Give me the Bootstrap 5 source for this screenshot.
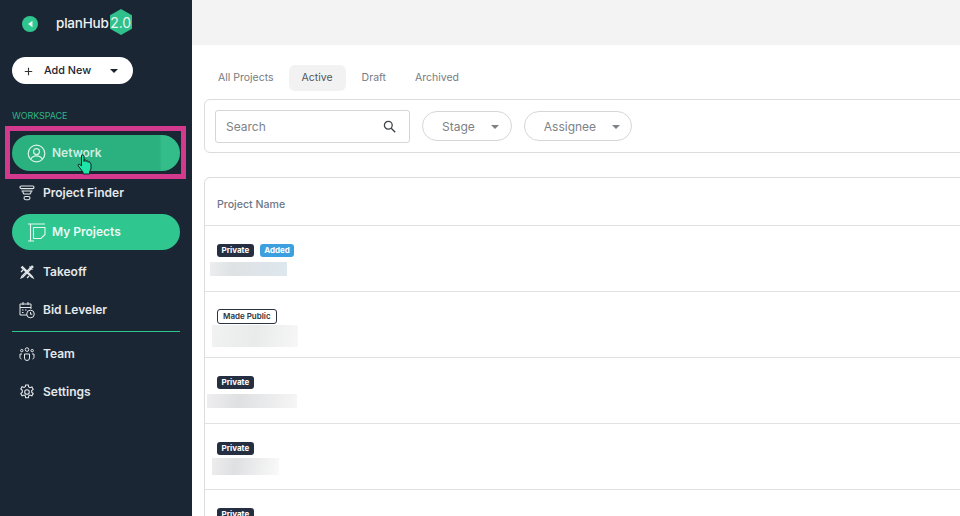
<!DOCTYPE html>
<html lang="en">
<head>
    <meta charset="UTF-8">
    <title>planHub</title>
    <link href="https://cdn.jsdelivr.net/npm/bootstrap@5.3.0/dist/css/bootstrap.min.css" rel="stylesheet">
    <style>
        html, body { height: 516px; overflow: hidden; }
        body { font-family: Inter, "Liberation Sans", sans-serif; background: #fff; }
        .app-shell { width: 960px; height: 516px; overflow: hidden; }

        /* sidebar */
        .side-panel { width: 192px; flex: none; background: #1a2633; color: #e9edf0; position: relative; padding: 0 12px; }
        .brand-row { height: 47px; padding: 0 0 0 10px; gap: 18px; }
        .back-dot { width: 16px; height: 16px; border-radius: 50%; background: #2fc68f; display: flex; align-items: center; justify-content: center; }
        .brand-name { font-size: 13.500px; font-weight: 500; color: #eef2f3; letter-spacing: -.2px; }
        .brand-hex { width: 24px; height: 28px; margin-top: -3px; position: relative; display: flex; align-items: center; justify-content: center; font-size: 14px; color: #e6f5ef; }
        .brand-hex svg { position: absolute; inset: 0; }
        .brand-hex span { position: relative; }
        .add-btn { width: 121px; height: 27px; margin-top: 10px; background: #fff; border-radius: 14px; color: #1b2530; font-size: 10.800px; font-weight: 500; padding: 1px 15px 0 12px; }
        .add-btn .caret-down { margin-left: auto; }
        .add-label { margin-left: 3px; }
        .caret-down { width: 0; height: 0; border-left: 4.500px solid transparent; border-right: 4.500px solid transparent; border-top: 4.500px solid currentColor; display: inline-block; }
        .side-label { font-size: 9px; color: #2fb586; margin-top: 26px; line-height: 11px; height: 11px; letter-spacing: -.1px; }
        .side-item { height: 36px; color: #e4e8eb; font-size: 12px; font-weight: 600; gap: 8px; padding-left: 7px; text-decoration: none; }
        .side-item svg { flex: none; }
        .side-pill { border-radius: 18px; padding-left: 15px; gap: 6px; color: #eafaf4; }
        .pill-hover { background: linear-gradient(90deg, #2bb07f 0, #2bb07f 147px, #33bd8a 150px); margin-top: 14px; color: #cdeee0; }
        .pill-active { background: #2fc68f; }
        .item-finder { height: 43px; }
        .item-takeoff { height: 44px; }
        .item-bid { height: 32px; }
        .item-team { height: 42px; padding-top: 1px; }
        .side-rule { height: 1px; background: #2fc68f; margin-top: 5px; }
        .pink-frame { position: absolute; left: 5px; top: 126px; width: 181px; height: 53px; border: 5px solid #d33a8d; pointer-events: none; }
        .hand-cursor { position: absolute; left: 77px; top: 154px; }

        /* main */
        .top-strip { height: 45px; background: #f3f3f3; }
        .tab-link { font-size: 10.500px; color: #777c82; padding: 0 11px; height: 26px; display: flex; align-items: center; border-radius: 6px; }
        .tab-on { background: #f2f2f2; color: #50565c; width: 57px; justify-content: center; padding: 0; margin-left: 4px; }
        .tab-draft { margin-left: 5px; }
        .tab-arch { margin-left: 7px; }
        .tab-row { margin: 20px 0 8px 15px; }
        .filter-box { margin-left: 12px; margin-right: -20px; height: 54px; border: 1px solid #dcdcdc; border-radius: 6px 0 0 6px; padding: 0 10px; gap: 12px; }
        .search-field { width: 195px; height: 33px; border: 1px solid #d6d6d6; border-radius: 3px; padding: 1px 13px 0 10px; color: #7d8287; font-size: 12px; }
        .round-select { height: 30px; border: 1px solid #d6d6d6; border-radius: 15px; color: #7d8287; font-size: 12px; padding: 1px 12px 0 19px; }
        .select-assignee { padding-right: 11px; }
        .table-box { margin: 24px -20px 0 12px; border: 1px solid #dcdcdc; border-radius: 6px 0 0 0; }
        .head-row { height: 47px; padding: 7px 12px 0; font-size: 10.600px; color: #6d7686; font-weight: 500; }
        .project-row { height: 66px; border-top: 1px solid #e2e2e2; padding: 18px 0 0 12px; }
        .tag-pill { font-size: 8px; font-weight: 700; line-height: 13px; height: 13px; padding: 0 4.500px; border-radius: 3px; color: #fff; display: inline-block; }
        .tag-dark { background: #252f41; }
        .tag-blue { background: #3c9fe0; }
        .tag-line { background: #fff; color: #2a3340; border: 1px solid #2a3340; height: 15px; font-weight: 600; padding: 0 5px; margin-top: -1px; }
        .tag-row { gap: 6px; height: 13px; }
        .blur-1 { width: 77px; height: 14px; margin: 5px 0 0 -7px; background: linear-gradient(100deg, #eceeef 0, #dfe2e4 30%, #dde7ee 100%); }
        .blur-2 { width: 86px; height: 22px; margin: 2px 0 0 -5px; background: linear-gradient(100deg, #f1f2f2 0, #e9eaea 50%, #f7f7f7 100%); }
        .blur-3 { width: 90px; height: 14px; margin: 5px 0 0 -10px; background: linear-gradient(100deg, #eeeeef 0, #dfe0e2 35%, #f6f6f6 100%); }
        .blur-4 { width: 67px; height: 17px; margin: 3px 0 0 -5px; background: linear-gradient(100deg, #ededee 0, #dfe0e2 35%, #fafafa 100%); }
    </style>
</head>
<body>
    <div class="app-shell d-flex">
        <aside class="side-panel">
            <div class="brand-row d-flex align-items-center">
                <span class="back-dot">
                    <svg width="7" height="8" viewBox="0 0 7 8"><path d="M5.500 .8v6.400L1 4z" fill="#e8f8f2"/></svg>
                </span>
                <span class="d-flex align-items-center">
                    <span class="brand-name">planHub</span>
                    <span class="brand-hex">
                        <svg width="24" height="28" viewBox="0 0 24 28"><path d="M12 1l11 6.200v13.600L12 27 1 20.800V7.200z" fill="#2fc08c"/></svg>
                        <span>2.0</span>
                    </span>
                </span>
            </div>
            <div class="add-btn d-flex align-items-center gap-2">
                <svg width="9" height="9" viewBox="0 0 9 9"><path d="M4.500 .8v7.400M.8 4.500h7.400" stroke="#333" stroke-width="1.100"/></svg>
                <span class="add-label">Add New</span>
                <span class="caret-down"></span>
            </div>
            <div class="side-label">WORKSPACE</div>
            <a class="side-item side-pill pill-hover d-flex align-items-center">
                <svg width="19" height="19" viewBox="0 0 19 19" fill="none" stroke="#d9f3e8" stroke-width="1.200"><circle cx="9.500" cy="9.500" r="8.300"/><circle cx="9.500" cy="7.600" r="3"/><path d="M4 15c1-2.600 3-3.200 5.500-3.200S14 12.400 15 15"/></svg>
                <span>Network</span>
            </a>
            <a class="side-item item-finder d-flex align-items-center">
                <svg width="16" height="16" viewBox="0 0 16 16" fill="none" stroke="#e4e8eb" stroke-width="1.100"><rect x="1" y="1" width="14" height="2.600" rx="1.300"/><path d="M2.500 6h11M3.800 6c0 2 1.200 3 1.200 3h6s1.200-1 1.200-3"/><rect x="5" y="11.500" width="6" height="3.200" rx="1.600"/></svg>
                <span>Project Finder</span>
            </a>
            <a class="side-item side-pill pill-active d-flex align-items-center">
                <svg width="19" height="19" viewBox="0 0 19 19" fill="none" stroke="#e6f8f1" stroke-width="1.100"><path d="M1 1h17M1 18h6M3.500 1v17M6.500 4.500h11.500v7l-4 4H6.500z"/></svg>
                <span>My Projects</span>
            </a>
            <a class="side-item item-takeoff d-flex align-items-center">
                <svg width="16" height="16" viewBox="0 0 16 16" fill="none" stroke="#e4e8eb" stroke-width="1.200"><path d="M2.500 3.500l10 9.500 1.500.8-.8-1.500L3.500 2.500zM13 2l1 1L4 13l-1.800.8.8-1.800zM10.500 2.500l3 3M2 8l2-2M8 14l2-2"/></svg>
                <span>Takeoff</span>
            </a>
            <a class="side-item item-bid d-flex align-items-center">
                <svg width="16" height="18" viewBox="0 0 16 18" fill="none" stroke="#e4e8eb" stroke-width="1"><path d="M8 14H1V3h11v5M1 6.500h11M4 1v3M9 1v3M3 9h1.500M6 9h1.500M3 11.500h1.500"/><circle cx="11.500" cy="13" r="3.800"/><path d="M11.500 11v2.200h1.800"/></svg>
                <span>Bid Leveler</span>
            </a>
            <div class="side-rule"></div>
            <a class="side-item item-team d-flex align-items-center">
                <svg width="16" height="14" viewBox="0 0 16 14" fill="none" stroke="#e4e8eb" stroke-width="1"><circle cx="8" cy="2.600" r="1.800"/><circle cx="2.800" cy="3.600" r="1.200"/><circle cx="13.200" cy="3.600" r="1.200"/><path d="M5.500 7h5v4a2.500 2.500 0 0 1-5 0zM3 7H1v3.500c0 .8.500 1.300 1.500 1.500M13 7h2v3.500c0 .8-.500 1.300-1.500 1.500"/></svg>
                <span>Team</span>
            </a>
            <a class="side-item d-flex align-items-center">
                <svg width="16" height="16" viewBox="0 0 16 16" fill="none" stroke="#e4e8eb" stroke-width="1.100"><circle cx="8" cy="8" r="2.300"/><path d="M6.700 1h2.600l.4 2 1.300.7 1.900-.7 1.300 2.300-1.500 1.300v1.600l1.500 1.300-1.300 2.300-1.900-.7-1.300.7-.4 2H6.700l-.4-2-1.300-.7-1.900.7-1.300-2.300 1.500-1.300V6.300L1.800 5l1.300-2.300 1.900.7 1.300-.7z"/></svg>
                <span>Settings</span>
            </a>
            <div class="pink-frame"></div>
            <svg class="hand-cursor" width="17" height="21" viewBox="0 0 17 21"><path d="M4.500 2c0-1.500 2.500-1.500 2.500 0v5.500V6.500c0-1 2-1 2 0v1c0-1 2-1 2 0v.8c0-.9 2-.9 2 .2l1 1.500v4c0 1.500-.8 2.700-1.500 3.500v2.500H6v-2L1.300 12c-.8-1.200.5-2.400 1.500-1.500l1.700 1.300z" fill="#1ee5a5" stroke="#152029" stroke-width="1"/></svg>
        </aside>

        <main class="flex-grow-1 overflow-hidden">
            <div class="top-strip"></div>
            <div class="tab-row d-flex">
                <div class="tab-link">All Projects</div>
                <div class="tab-link tab-on">Active</div>
                <div class="tab-link tab-draft">Draft</div>
                <div class="tab-link tab-arch">Archived</div>
            </div>
            <div class="filter-box d-flex align-items-center">
                <div class="search-field d-flex align-items-center justify-content-between">
                    <span>Search</span>
                    <svg width="13" height="13" viewBox="0 0 13 13" fill="none" stroke="#3d4349" stroke-width="1.300"><circle cx="5.300" cy="5.300" r="3.900"/><path d="M8.200 8.200l4 4"/></svg>
                </div>
                <div class="round-select d-flex align-items-center gap-3">
                    <span>Stage</span><span class="caret-down"></span>
                </div>
                <div class="round-select select-assignee d-flex align-items-center gap-3">
                    <span>Assignee</span><span class="caret-down"></span>
                </div>
            </div>
            <div class="table-box">
                <div class="head-row d-flex align-items-center">Project Name</div>
                <div class="project-row">
                    <div class="tag-row d-flex"><span class="tag-pill tag-dark">Private</span><span class="tag-pill tag-blue">Added</span></div>
                    <div class="blur-1"></div>
                </div>
                <div class="project-row">
                    <div class="tag-row d-flex"><span class="tag-pill tag-line">Made Public</span></div>
                    <div class="blur-2"></div>
                </div>
                <div class="project-row">
                    <div class="tag-row d-flex"><span class="tag-pill tag-dark">Private</span></div>
                    <div class="blur-3"></div>
                </div>
                <div class="project-row">
                    <div class="tag-row d-flex"><span class="tag-pill tag-dark">Private</span></div>
                    <div class="blur-4"></div>
                </div>
                <div class="project-row">
                    <div class="tag-row d-flex"><span class="tag-pill tag-dark">Private</span></div>
                </div>
            </div>
        </main>
    </div>
    <script src="https://cdn.jsdelivr.net/npm/bootstrap@5.3.0/dist/js/bootstrap.bundle.min.js"></script>
</body>
</html>
